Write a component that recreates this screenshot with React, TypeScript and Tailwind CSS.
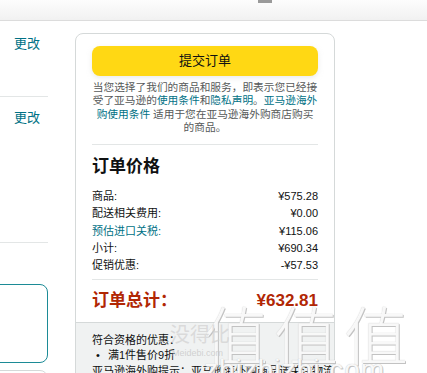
import React from "react";

const FONT = '"Liberation Sans", "Noto Sans CJK SC", Arial, sans-serif';

function Row({ label, value, link }: { label: string; value: string; link?: boolean }) {
  return (
    <div className="flex justify-between text-[11px] leading-[17.3px]">
      <span className={link ? "text-[#007185]" : "text-[#0f1111]"}>{label}</span>
      <span className="text-[#0f1111]">{value}</span>
    </div>
  );
}

export default function App() {
  return (
    <div
      className="relative w-[427px] h-[373px] overflow-hidden bg-white text-[#0f1111]"
      style={{ fontFamily: FONT }}
    >
      {/* top bar */}
      <div className="relative h-[21px] bg-gradient-to-b from-[#fdfdfd] to-[#f1f1f1] border-b border-[#dcdcdc]">
        <div className="absolute left-[258px] top-0 w-[14px] h-[3px] bg-[#9a9a9a]" />
      </div>

      <div className="flex">
        {/* left column */}
        <div className="w-[48px] shrink-0 flex flex-col">
          <div className="pl-[14px] pt-[14px] h-[75px] text-[13px] leading-[18px] text-[#007185]">更改</div>
          <div className="h-px bg-[#e3e6e6]" />
          <div className="pl-[14px] pt-[12px] h-[145px] text-[13px] leading-[18px] text-[#007185]">更改</div>
          <div className="h-px bg-[#e3e6e6]" />
          <div className="h-[41px]" />
          <div className="h-[79px] -ml-[10px] border border-[#1c8b96] rounded-r-[8px]" />
          <div className="h-[7px]" />
          <div className="h-[20px] -ml-[10px] border border-[#d5d9d9] rounded-tr-[8px]" />
        </div>

        <div className="w-[27px] shrink-0" />

        {/* order card */}
        <div className="mt-[12px] w-[260px] h-[400px] shrink-0 border border-[#d5d9d9] rounded-[8px] overflow-hidden flex flex-col">
          <div className="px-4 pt-[12px]">
            <button className="w-full h-[30px] rounded-[8px] bg-[#ffd814] text-[13px] text-[#0f1111] shadow-[0_2px_5px_rgba(213,217,217,0.5)]">
              提交订单
            </button>
            <div className="mt-[5px] flex flex-col items-center text-[10.7px] leading-[13.3px] text-[#565959] whitespace-nowrap">
              <span>当您选择了我们的商品和服务，即表示您已经接</span>
              <span>
                受了亚马逊的<span className="text-[#007185]">使用条件</span>和
                <span className="text-[#007185]">隐私声明</span>。
                <span className="text-[#007185]">亚马逊海外</span>
              </span>
              <span>
                <span className="text-[#007185]">购使用条件</span> 适用于您在亚马逊海外购商店购买
              </span>
              <span>的商品。</span>
            </div>
            <div className="mt-[10px] h-px bg-[#e3e6e6]" />
            <h2 className="mt-[11px] text-[17px] leading-[22px] font-bold">订单价格</h2>
            <div className="mt-[10px]">
              <Row label="商品:" value="¥575.28" />
              <Row label="配送相关费用:" value="¥0.00" />
              <Row label="预估进口关税:" value="¥115.06" link />
              <Row label="小计:" value="¥690.34" />
              <Row label="促销优惠:" value="-¥57.53" />
            </div>
            <div className="mt-[4px] h-px bg-[#e3e6e6]" />
            <div className="flex justify-between items-center h-[42px] text-[#b12704] font-bold text-[17px]">
              <span>订单总计：</span>
              <span>¥632.81</span>
            </div>
          </div>
          <div className="flex-1 bg-[#f0f2f2] border-t border-[#d5d9d9] px-4 pt-[10px] text-[11px] leading-[15px] text-[#0f1111]">
            <div>符合资格的优惠：</div>
            <div className="flex">
              <span className="w-[16px] pl-[4px]">•</span>
              <span>满1件售价9折</span>
            </div>
            <div className="mt-[1px] whitespace-nowrap">亚马逊海外购提示：亚马逊海外购商品请关注物流信息</div>
          </div>
        </div>
      </div>

      {/* watermark overlay */}
      <div className="absolute left-[204px] top-[300px] pointer-events-none select-none">
        <div
          className="text-[64px] leading-[64px] font-light tracking-[6px] text-white/90 [text-shadow:0_0_1px_#b8b8b8,1px_1px_0_#c4c4c4]"
          style={{ fontFamily: '"Noto Sans CJK SC", sans-serif' }}
        >
          值值值
        </div>
        <div className="-mt-[8px] text-[28px] leading-[28px] text-white/90 tracking-[1px] [text-shadow:0_0_1px_#b8b8b8,1px_1px_0_#c4c4c4]">
          zhizhizhi.com
        </div>
      </div>
      <div className="absolute left-[170px] top-[324px] text-[20px] leading-[22px] text-[#d0d0d0]/70 pointer-events-none">
        没得比
      </div>
      <div className="absolute left-[172px] top-[348px] text-[9px] leading-[10px] text-[#c8c8c8]/80 pointer-events-none">
        Meidebi.com
      </div>
    </div>
  );
}
